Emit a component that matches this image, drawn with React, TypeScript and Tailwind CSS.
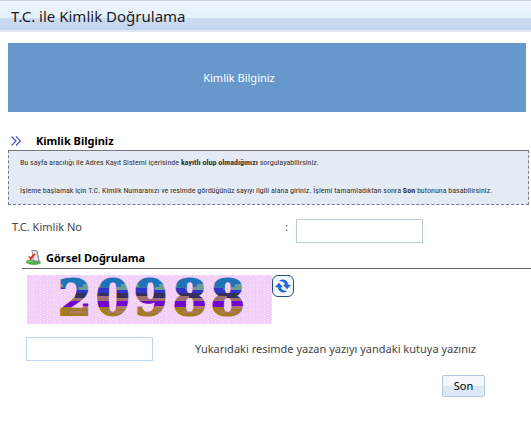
import type React from "react";

interface Band {
    x: number;
    y: number;
    w: number;
    h: number;
    color: string;
}

// Colour bands inside each captcha digit, repeated every 38px
const bands: Band[] = [
    { x: 0, y: 0, w: 38, h: 12, color: "#1f73b9" },
    { x: 0, y: 9, w: 6, h: 4, color: "#5f9ba0" },
    { x: 26, y: 9, w: 12, h: 4, color: "#6f9c92" },
    { x: 0, y: 12, w: 24, h: 3, color: "#3f6fa8" },
    { x: 22, y: 12, w: 16, h: 3, color: "#6f9c92" },
    { x: 0, y: 13, w: 14, h: 6, color: "#2f35c4" },
    { x: 14, y: 15, w: 24, h: 4, color: "#2f35c4" },
    { x: 0, y: 18, w: 38, h: 5, color: "#35305c" },
    { x: 0, y: 21, w: 18, h: 5, color: "#a0706c" },
    { x: 18, y: 23, w: 20, h: 3, color: "#a0706c" },
    { x: 0, y: 26, w: 38, h: 6, color: "#7007d0" },
    { x: 0, y: 32, w: 38, h: 17, color: "#a27c24" },
    { x: 22, y: 31, w: 16, h: 3, color: "#b0766a" },
    { x: 12, y: 36, w: 16, h: 2, color: "#b0766a" },
];

const digits = [
    { char: "2", x: 58 },
    { char: "0", x: 96 },
    { char: "9", x: 134 },
    { char: "8", x: 173 },
    { char: "8", x: 211 },
];

const Captcha: React.FC = () => (
    <svg width="245" height="49" viewBox="27 0 245 49" role="img" aria-label="Doğrulama resmi" className="block shrink-0 overflow-visible">
        <defs>
            <pattern id="noise" width="7" height="5" patternUnits="userSpaceOnUse">
                <rect width="7" height="5" fill="#f5d4fb" />
                <path d="M0 0h1v1h-1zM3 1h1v1h-1zM6 2h1v1h-1zM2 3h1v1h-1zM5 4h1v1h-1z" fill="#f0c2ec" />
                <path d="M1 1h1v1h-1zM4 2h1v1h-1zM0 3h1v1h-1zM3 4h1v1h-1z" fill="#e9cdfb" />
                <path d="M5 0h1v1h-1zM1 4h1v1h-1zM5 3h1v1h-1z" fill="#fbe4fb" />
            </pattern>
            <pattern id="bands" x="57" width="38" height="49" patternUnits="userSpaceOnUse">
                {bands.map((b, i) => (
                    <rect key={i} x={b.x} y={b.y} width={b.w} height={b.h} fill={b.color} />
                ))}
            </pattern>
        </defs>
        <rect x="27" width="245" height="49" fill="url(#noise)" />
        <g fill="url(#bands)" stroke="url(#bands)" strokeWidth="2" className="font-['DejaVu_Serif',serif] text-[48px] leading-none font-bold">
            {digits.map((d) => (
                <text key={d.x} x={d.x} y="40">
                    {d.char}
                </text>
            ))}
        </g>
    </svg>
);

const RefreshIcon: React.FC = () => (
    <svg width="16" height="16" viewBox="0 0 16 16" aria-hidden="true">
        <g fill="#1d6ae0" stroke="#0d46ab" strokeWidth="0.4" strokeLinejoin="round">
            <path d="M4.500 2.800C8.500 0.500 12.500 2.500 13 7H15.500L12 11L8.500 7H10.500C10 4.500 8 3 4.500 2.800Z" />
            <path d="M11.500 13.200C7.500 15.500 3.500 13.500 3 9H0.500L4 5L7.500 9H5.500C6 11.500 8 13 11.500 13.200Z" />
        </g>
    </svg>
);

const CheckIcon: React.FC = () => (
    <svg width="17" height="17" viewBox="0 0 17 17" aria-hidden="true">
        <path d="M0.500 13C2 10.500 6 10 9 11C13 10.500 16.500 12 16 14C14 16.500 3 17 0.500 13Z" fill="#4fb548" />
        <path d="M2 13C5 11.500 10 12 13 13" stroke="#8bd67f" fill="none" />
        <path d="M6.500 0.800L12.500 1.500L14.800 13L13 14L8 12.500Z" fill="#85898f" />
        <path d="M7.500 1.800L11.500 2.500L13.200 12L8.800 11Z" fill="#e9ebef" />
        <path d="M3 6.500L5.300 8L10 4L10.500 5.500L5.500 11.500Z" fill="#e52d2d" />
    </svg>
);

const ChevronsIcon: React.FC = () => (
    <svg width="10" height="10" viewBox="0 0 10 10" fill="none" stroke="#4450d8" strokeWidth="1.200" aria-hidden="true">
        <path d="M0.500 0.500L5 5L0.500 9.500M5 0.500L9.500 5L5 9.500" />
    </svg>
);

export default function App() {
    return (
        <main className="bg-white font-['Noto_Sans',sans-serif] text-[11px] leading-4 text-[#444]">
            <header className="flex h-8 items-center border-t border-b-2 border-t-[#c9d5e6] border-b-[#dfe8f6] bg-[linear-gradient(#f0f4fd_0,#e2f2fb_17px,#cddcf3_17px,#c4d4ec_100%)] pl-[11px]">
                <h1 className="text-[15px] text-[#1c1c1c]">T.C. ile Kimlik Doğrulama</h1>
            </header>

            <div className="mt-[11px] mr-[5px] ml-2 flex h-[69px] items-center justify-center bg-[#6698cc] pr-14 text-white">
                Kimlik Bilginiz
            </div>

            <section className="mt-5 ml-2">
                <h2 className="flex h-[18px] items-center gap-[15px] pl-[3px] font-bold text-black">
                    <ChevronsIcon />
                    Kimlik Bilginiz
                </h2>
                <div className="mr-[2px] border border-dashed border-[#777d88] border-t-[#777] bg-[#e4ebf5] pt-[5px] pr-1 pb-[6px] pl-[11px] font-['Roboto_Condensed','Noto_Sans',sans-serif] text-[8px] leading-[14px] text-[#333] [border-top-style:solid]">
                    <p>
                        Bu sayfa aracılığı ile Adres Kayıt Sistemi içerisinde <b>kayıtlı olup olmadığınızı</b> sorgulayabilirsiniz.
                    </p>
                    <p className="mt-[14px]">
                        İşleme başlamak için T.C. Kimlik Numaranızı ve resimde gördüğünüz sayıyı ilgili alana giriniz. İşlemi tamamladıktan sonra <b>Son</b> butonuna basabilirsiniz.
                    </p>
                </div>
            </section>

            <form onSubmit={(e) => e.preventDefault()}>
                <div className="mt-[14px] flex items-start pl-3">
                    <label htmlFor="identity" className="w-[273px]">
                        T.C. Kimlik No
                    </label>
                    <span className="w-[11px]">:</span>
                    <input id="identity" type="text" className="h-6 w-[127px] border border-[#b9cad8] bg-white px-1 outline-none" />
                </div>

                <h2 className="mt-1 ml-[22px] flex h-[22px] items-center gap-1 border-b border-[#666] pl-[3px] font-bold text-black">
                    <CheckIcon />
                    Görsel Doğrulama
                </h2>

                <div className="mt-[6px] flex items-start pl-[27px]">
                    <Captcha />
                    <button type="button" aria-label="Resmi yenile" className="flex h-[22px] w-[22px] items-center justify-center rounded-md border border-[#245080] bg-[#f3f6fa]">
                        <RefreshIcon />
                    </button>
                </div>

                <div className="mt-[13px] flex items-center gap-[42px] pl-[26px]">
                    <input id="captcha" type="text" className="h-6 w-[127px] border border-[#bdd7f5] bg-white px-1 outline-none" />
                    <label htmlFor="captcha">Yukarıdaki resimde yazan yazıyı yandaki kutuya yazınız</label>
                </div>

                <div className="mt-[14px] flex justify-end pr-[46px]">
                    <button type="submit" className="h-[22px] w-[43px] rounded-xs border border-[#b5c7de] bg-[linear-gradient(#f4f8fd_50%,#dde8f6_50%)] text-black">
                        Son
                    </button>
                </div>
            </form>
        </main>
    );
}
